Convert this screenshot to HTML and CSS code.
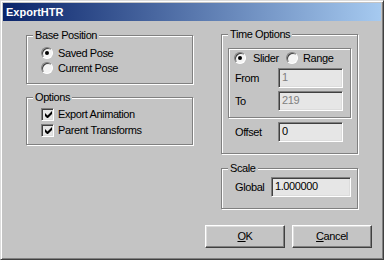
FILE: index.html
```html
<!DOCTYPE html>
<html lang="en">
<head>
  <meta charset="UTF-8" />
  <title>ExportHTR</title>
  <link rel="stylesheet" href="styles.css">
</head>
<body>
  <div class="window">
    <div class="titlebar">ExportHTR</div>
    <div class="client">
      <div class="columns">
        <div class="col-left">
          <div class="group group-base">
            <div class="group-title">Base Position</div>
            <div class="rows">
              <div class="option"><span class="radio checked"></span>Saved Pose</div>
              <div class="option"><span class="radio"></span>Current Pose</div>
            </div>
          </div>
          <div class="group group-options">
            <div class="group-title">Options</div>
            <div class="rows">
              <div class="option check-row">
                <span class="checkbox"><svg width="7" height="7" viewBox="0 0 7 7"><path d="M0 2v3l2 2h1l4-4V0L2.5 4.5z" fill="#000"/></svg></span>Export Animation
              </div>
              <div class="option check-row">
                <span class="checkbox"><svg width="7" height="7" viewBox="0 0 7 7"><path d="M0 2v3l2 2h1l4-4V0L2.5 4.5z" fill="#000"/></svg></span>Parent Transforms
              </div>
            </div>
          </div>
        </div>

        <div class="col-right">
          <div class="group group-time">
            <div class="group-title">Time Options</div>
            <div class="inner-box">
              <div class="radio-row">
                <div class="radio-item slider"><span class="radio checked"></span>Slider</div>
                <div class="radio-item"><span class="radio"></span>Range</div>
              </div>
              <div class="field from">
                <span class="field-label">From</span>
                <span class="input disabled">1</span>
              </div>
              <div class="field to">
                <span class="field-label">To</span>
                <span class="input disabled">219</span>
              </div>
            </div>
            <div class="field offset">
              <span class="field-label">Offset</span>
              <span class="input">0</span>
            </div>
          </div>
          <div class="group group-scale">
            <div class="group-title">Scale</div>
            <div class="field global">
              <span class="field-label">Global</span>
              <span class="input wide">1.000000</span>
            </div>
          </div>
        </div>
      </div>

      <div class="buttons">
        <div class="button"><u>O</u>K</div>
        <div class="button"><u>C</u>ancel</div>
      </div>
    </div>
  </div>
</body>
</html>
```

FILE: styles.css
```css
:root {
  --face: #c4c4c4;
  --shadow: #808080;
  --dark: #404040;
  --light: #dcdcdc;
  --field: #e6e6e6;
}

html, body {
  margin: 0;
  padding: 0;
  background: var(--face);
}

body {
  font-family: "Liberation Sans", Arial, sans-serif;
  font-size: 11px;
  letter-spacing: -0.4px;
  color: #000;
}

.window {
  width: 384px;
  height: 260px;
  box-sizing: border-box;
  padding: 2px;
  background: var(--face);
  border: 1px solid;
  border-color: var(--light) var(--dark) var(--dark) var(--light);
  box-shadow: inset 1px 1px 0 #fff, inset -1px -1px 0 var(--shadow);
}

.titlebar {
  height: 18px;
  line-height: 18px;
  padding-left: 3px;
  background: linear-gradient(to right, #0a246a, #a6caf0);
  color: #fff;
  font-weight: bold;
  letter-spacing: 0;
}

.client {
  height: 236px;
}

.columns {
  display: flex;
  padding: 13px 0 0 23px;
}

.col-left {
  width: 167px;
  margin-top: 1px;
}

.col-right {
  width: 137px;
  margin-left: 28px;
}

/* etched group box */
.group {
  box-sizing: border-box;
  border: 1px solid var(--shadow);
  box-shadow: inset 1px 1px 0 #fff, 1px 1px 0 #fff;
}

.group-title {
  width: fit-content;
  height: 13px;
  line-height: 13px;
  margin: -7px 0 0 6px;
  padding: 0 2px;
  background: var(--face);
}

.group-base { height: 49px; }
.group-options { height: 48px; margin-top: 13px; }
.group-time { height: 120px; }
.group-scale { height: 41px; margin-top: 14px; }

.group-base .rows { margin-top: 3px; }
.group-options .rows { margin-top: 2px; }

.option {
  display: flex;
  align-items: center;
  height: 15px;
  padding-left: 14px;
}

.check-row {
  height: 16px;
}

.radio {
  position: relative;
  flex: none;
  width: 12px;
  height: 12px;
  box-sizing: border-box;
  margin-right: 5px;
  border-radius: 50%;
  border: 1px solid;
  border-color: var(--shadow) #fff #fff var(--shadow);
  background: #f4f4f4;
  box-shadow: inset 1px 1px 0 var(--dark);
}

.radio.checked::after {
  content: "";
  position: absolute;
  left: 3px;
  top: 3px;
  width: 4px;
  height: 4px;
  border-radius: 50%;
  background: #000;
}

.checkbox {
  flex: none;
  display: flex;
  align-items: center;
  justify-content: center;
  width: 13px;
  height: 13px;
  box-sizing: border-box;
  margin-right: 4px;
  border: 1px solid;
  border-color: var(--shadow) #fff #fff var(--shadow);
  background: var(--field);
  box-shadow: inset 1px 1px 0 var(--dark), inset -1px -1px 0 var(--light);
}

.checkbox svg {
  display: block;
  margin: 1px 0 0 1px;
}

.inner-box {
  box-sizing: border-box;
  width: 123px;
  height: 70px;
  margin: 7px 0 0 6px;
  border: 1px solid var(--shadow);
  box-shadow: inset 1px 1px 0 #fff, 1px 1px 0 #fff;
}

.radio-row {
  display: flex;
  align-items: center;
  height: 18px;
  padding-left: 5px;
}

.radio-item {
  display: flex;
  align-items: center;
}

.radio-item.slider {
  width: 52px;
}

.radio-item.slider .radio {
  margin-right: 7px;
}

.field {
  display: flex;
  align-items: center;
  height: 20px;
}

.field-label {
  width: 43px;
}

.inner-box .field { padding-left: 6px; }
.field.from { margin-top: 1px; }
.field.to { margin-top: 3px; }
.field.offset { margin-top: 4px; padding-left: 13px; }
.field.global { margin-top: 2px; padding-left: 13px; }
.global .field-label { width: 36px; }

.input {
  box-sizing: border-box;
  width: 65px;
  height: 20px;
  line-height: 16px;
  padding-left: 3px;
  background: var(--field);
  border: 1px solid;
  border-color: var(--shadow) #fff #fff var(--shadow);
  box-shadow: inset 1px 1px 0 var(--dark), inset -1px -1px 0 var(--light);
}

.input.disabled {
  color: var(--shadow);
}

.input.wide {
  width: 80px;
}

.buttons {
  display: flex;
  justify-content: flex-end;
  gap: 7px;
  margin-top: 16px;
  padding-right: 9px;
}

.button {
  box-sizing: border-box;
  width: 80px;
  height: 23px;
  line-height: 21px;
  text-align: center;
  border: 1px solid;
  border-color: #fff var(--dark) var(--dark) #fff;
  box-shadow: inset -1px -1px 0 var(--shadow), inset 1px 1px 0 var(--light);
}
```
